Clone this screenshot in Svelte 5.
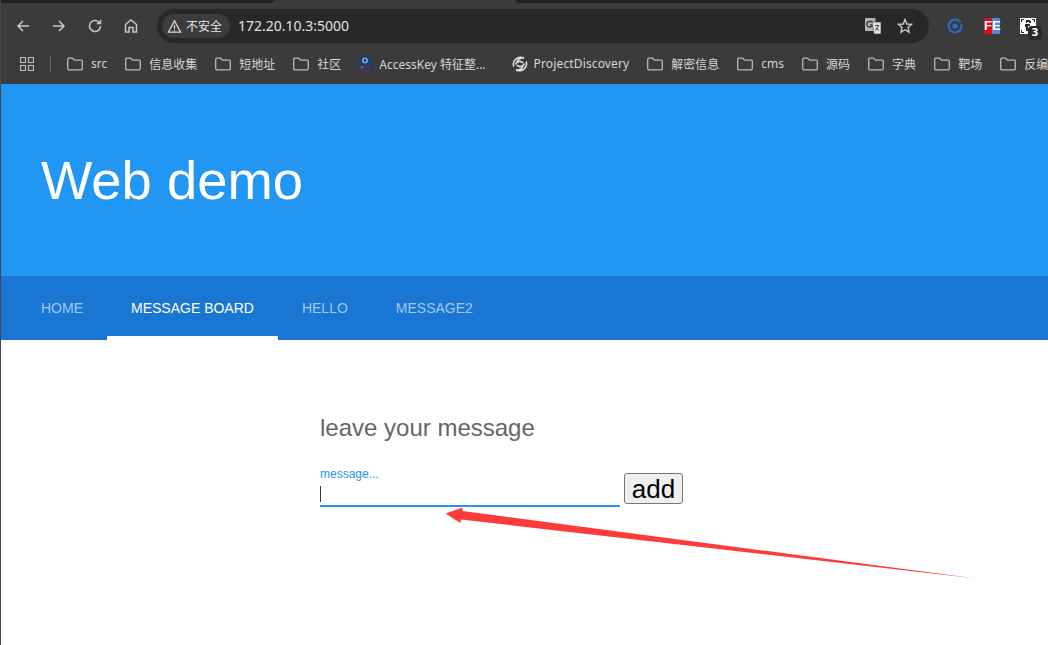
<script>
  const bookmarks = [
    { label: 'src' },
    { label: '信息收集' },
    { label: '短地址' },
    { label: '社区' },
    { label: 'AccessKey 特征整...', icon: 'avatar' },
    { label: 'ProjectDiscovery', icon: 'swirl', latin: true },
    { label: '解密信息' },
    { label: 'cms' },
    { label: '源码' },
    { label: '字典' },
    { label: '靶场' },
    { label: '反编' }
  ];

  const tabs = ['Home', 'Message board', 'Hello', 'Message2'];
  let active = 1;
  let message = '';
</script>

<div class="page">
  <div class="browser">
    <div class="tabstrip">
      <div class="strip left"></div>
      <div class="strip right"></div>
    </div>

    <div class="toolbar">
      <div class="navbtns">
        <svg viewBox="0 0 16 16"><path d="M14 8H3M8 3 3 8l5 5" /></svg>
        <svg viewBox="0 0 16 16"><path d="M2 8h11M8 3l5 5-5 5" /></svg>
        <svg viewBox="0 0 16 16"><path d="M13.500 8a5.500 5.500 0 1 1-1.700-4L13.500 5.600M13.500 1.800v3.800H9.700" /></svg>
        <svg viewBox="0 0 16 16"><path d="M2.500 14V6.500L8 2l5.500 4.500V14H10V9.500H6V14z" /></svg>
      </div>
      <div class="omnibox">
        <div class="chip">
          <svg viewBox="0 0 16 16"><path d="M8 2 1.500 14h13zM8 6.500v4M8 11.500v1.200" /></svg>
          <span>不安全</span>
        </div>
        <span class="url">172.20.10.3:5000</span>
        <div class="omni-icons">
          <svg class="translate" viewBox="0 0 16 16">
            <rect x="0" y="0" width="10.500" height="13" rx="1" fill="#b4b4b4" />
            <path d="M7.500 3.500h-3a2 2 0 0 0 0 5.500h1.300a1.500 1.500 0 0 0 1.200-2.200H5" fill="none" stroke="#3b3b3b" stroke-width="1.300" />
            <path d="M7 4h9v12H9z" fill="#e0e0e0" stroke="#3b3b3b" stroke-width=".6" />
            <path d="M10 7.500h4M12 7v1M13.200 8c-.5 2-1.500 3.500-3 4.500M11 9.500c.5 1.200 1.500 2.300 2.700 3" fill="none" stroke="#333" stroke-width=".9" />
          </svg>
          <svg class="star" viewBox="0 0 16 16"><path d="M8 1.600 9.800 6l4.800.4-3.600 3.100 1.100 4.700L8 11.700l-4.100 2.500L5 9.500 1.400 6.400 6.200 6z" /></svg>
        </div>
      </div>
      <div class="extensions">
        <svg class="ext-ring" viewBox="0 0 16 16">
          <path d="M12.400 3.200A6.400 6.400 0 1 0 14.200 6" fill="none" stroke="#2a6fd0" stroke-width="1.900" />
          <circle cx="8" cy="8" r="2.600" fill="#2a6fd0" />
          <circle cx="13" cy="3.600" r="1.200" fill="#2a6fd0" />
        </svg>
        <div class="ext-fe"><span>FE</span></div>
        <div class="ext-qr">
          <svg viewBox="0 0 16 16">
            <rect width="16" height="16" fill="#fff" />
            <path d="M1 1h3v1H2v2H1zM12 1h3v3h-1V2h-2zM1 12h1v2h2v1H1zM6 2h4v1h1v2h-2V4H7v1H6zM5 6h5v2H8v2h1v3H6V9H5z" fill="#2a2a2a" />
          </svg>
          <span class="badge">3</span>
        </div>
      </div>
    </div>

    <div class="bookmarks">
      <svg class="apps" viewBox="0 0 14 14">
        <rect x=".5" y=".5" width="5" height="5" />
        <rect x="8.500" y=".5" width="5" height="5" />
        <rect x=".5" y="8.500" width="5" height="5" />
        <rect x="8.500" y="8.500" width="5" height="5" />
      </svg>
      <div class="divider"></div>
      {#each bookmarks as b}
        <div class="bookmark" class:fav={b.icon} class:avatar={b.icon === 'avatar'} class:latin={b.latin}>
          {#if b.icon === 'avatar'}
            <svg viewBox="0 0 16 16">
              <circle cx="8" cy="8" r="8" fill="#1d3f63" />
              <circle cx="8" cy="4.500" r="3" fill="#7ea6e0" />
              <circle cx="8" cy="4.500" r="1.400" fill="#1f3d66" />
              <path d="M3 15V10h4v3h2v-3h4v5l-2 1H5z" fill="#4a3358" />
              <circle cx="5" cy="11" r="1" fill="#c75a7a" />
            </svg>
          {:else if b.icon === 'swirl'}
            <svg viewBox="0 0 16 16" fill="none" stroke="#e0e0e0" stroke-width="1.600">
              <path d="M1.800 10.500A7 7 0 0 1 12 2.300C9 1.500 5.500 3 5 6.500" />
              <path d="M14.200 5.500A7 7 0 0 1 4 13.700C7 14.500 10.500 13 11 9.500" />
              <path d="M3.500 8.500C5 4.800 9 4.500 11 7M12.500 7.500C11 11.200 7 11.500 5 9" />
            </svg>
          {:else}
            <svg viewBox="0 0 16 16" fill="none" stroke="#b9b9b9" stroke-width="1.300">
              <path d="M.7 3.200c0-.6.4-1 1-1h4l1.800 1.900h6.800c.6 0 1 .4 1 1v7.700c0 .6-.4 1-1 1H1.700c-.6 0-1-.4-1-1z" />
            </svg>
          {/if}
          <span>{b.label}</span>
        </div>
      {/each}
    </div>
  </div>

  <header class="hero">
    <h1>Web demo</h1>
  </header>

  <nav class="tabs">
    {#each tabs as tab, i}
      <a href="#top" class="tab" class:active={i === active} on:click|preventDefault={() => (active = i)}>{tab}</a>
    {/each}
  </nav>

  <main class="content">
    <h2>leave your message</h2>
    <form class="msgform" on:submit|preventDefault>
      <div class="field">
        <label for="msg">message...</label>
        <input id="msg" type="text" bind:value={message} />
        <span class="caret"></span>
      </div>
      <button type="submit">add</button>
    </form>
  </main>

  <svg class="arrow" viewBox="0 0 1048 645">
    <path d="M445.500 513.500 462.500 507.500 462.500 511 976 578.500 461 519.500 460.500 523z" />
  </svg>
  <div class="edge"></div>
</div>

<style>
  :global(body) {
    margin: 0;
    background: #fff;
    overflow: hidden;
  }

  .page {
    position: relative;
    width: 1048px;
    height: 645px;
    overflow: hidden;
    font-family: "Liberation Sans", Arial, sans-serif;
  }

  /* sliver of the window behind, along the left of the screenshot */
  .edge {
    position: absolute;
    left: 0;
    top: 0;
    bottom: 0;
    width: 1px;
    background: #474747;
  }

  /* browser chrome */
  .browser {
    height: 84px;
    background: #3b3b3b;
    color: #d6d6d6;
    font-family: "Noto Sans", "Noto Sans CJK SC", sans-serif;
  }

  .tabstrip {
    display: flex;
    justify-content: space-between;
    height: 9px;
  }

  .strip {
    height: 3px;
    background: #212121;
  }

  .strip.left {
    width: 274px;
    border-bottom-right-radius: 3px;
  }

  .strip.right {
    width: 532px;
    border-bottom-left-radius: 3px;
  }

  .toolbar {
    display: flex;
    align-items: center;
    height: 34px;
  }

  .navbtns {
    display: flex;
    flex: none;
    gap: 20px;
    padding-left: 15px;
    width: 157px;
    box-sizing: border-box;
  }

  .navbtns svg {
    width: 16px;
    height: 16px;
    fill: none;
    stroke: #c7c7c7;
    stroke-width: 1.500;
  }

  .omnibox {
    display: flex;
    flex: none;
    align-items: center;
    width: 772px;
    height: 34px;
    border-radius: 17px;
    background: #282828;
    padding-left: 5px;
    box-sizing: border-box;
  }

  .chip {
    display: flex;
    align-items: center;
    gap: 4px;
    width: 68px;
    height: 24px;
    padding-left: 5px;
    box-sizing: border-box;
    border-radius: 12px;
    background: #3c3c3c;
    font-size: 12px;
    color: #e3e3e3;
  }

  .chip svg {
    width: 15px;
    height: 15px;
    fill: none;
    stroke: #d8d8d8;
    stroke-width: 1.300;
  }

  .url {
    margin: 0 0 2px 8px;
    font-size: 14px;
    color: #e3e3e3;
  }

  .omni-icons {
    display: flex;
    align-items: center;
    gap: 16px;
    margin-left: auto;
    padding-right: 16px;
  }

  .omni-icons svg {
    width: 16px;
    height: 16px;
  }

  .star {
    fill: none;
    stroke: #c7c7c7;
    stroke-width: 1.400;
  }

  .extensions {
    display: flex;
    align-items: center;
    padding-left: 18px;
    gap: 20px;
  }

  .ext-ring {
    width: 16px;
    height: 16px;
  }

  .ext-fe {
    position: relative;
    width: 16px;
    height: 16px;
    background: linear-gradient(90deg, #e5061b 50%, #4f86e8 50%);
    border-radius: 1px;
    font: bold 13px/16px "Liberation Sans", sans-serif;
    color: #fff;
    text-align: center;
    margin-left: 1px;
  }

  .ext-qr {
    position: relative;
    width: 16px;
    height: 16px;
  }

  .ext-qr svg {
    display: block;
    width: 16px;
    height: 16px;
  }

  .badge {
    position: absolute;
    left: 8px;
    top: 8px;
    width: 14px;
    height: 14px;
    border-radius: 4px;
    background: #2a2a2a;
    color: #fff;
    font: bold 10px/14px "DejaVu Sans", sans-serif;
    text-align: center;
  }

  .bookmarks {
    display: flex;
    align-items: center;
    height: 41px;
    padding-left: 20px;
    white-space: nowrap;
    overflow: hidden;
  }

  .apps {
    flex: none;
    width: 14px;
    height: 14px;
    fill: none;
    stroke: #b9b9b9;
    stroke-width: 1.200;
  }

  .divider {
    flex: none;
    width: 1px;
    height: 16px;
    margin: 0 16px 0 16px;
    background: #6a6a6a;
  }

  .bookmark {
    flex: none;
    display: flex;
    align-items: center;
    gap: 8px;
    margin-right: 18px;
    font-size: 12px;
    color: #d6d6d6;
  }

  .bookmark.fav {
    gap: 6px;
  }

  .bookmark.avatar {
    margin-left: -2px;
    margin-right: 26px;
  }

  .bookmark.latin {
    letter-spacing: 0.14px;
  }

  .bookmark svg {
    width: 16px;
    height: 16px;
  }

  /* page */
  .hero {
    display: flex;
    align-items: center;
    height: 192px;
    padding-left: 41px;
    background: #2196f3;
    color: #fff;
  }

  h1 {
    margin: 0;
    font-size: 54.400px;
    font-weight: 400;
  }

  .tabs {
    display: flex;
    height: 64px;
    padding-left: 17px;
    background: #1976d2;
  }

  .tab {
    display: flex;
    align-items: center;
    padding: 0 24px;
    font-size: 14px;
    text-transform: uppercase;
    text-decoration: none;
    color: rgba(255, 255, 255, 0.6);
  }

  .tab.active {
    color: #fff;
    box-shadow: inset 0 -4px 0 #fff;
  }

  .content {
    padding: 74px 0 0 320px;
  }

  h2 {
    margin: 0;
    font-size: 24px;
    line-height: 28px;
    font-weight: 400;
    color: #666;
  }

  .msgform {
    display: flex;
    align-items: flex-end;
    margin-top: 25px;
  }

  .field {
    position: relative;
    width: 300px;
  }

  label {
    display: block;
    font-size: 12px;
    line-height: 14px;
    color: #2196f3;
  }

  input {
    display: block;
    width: 100%;
    height: 26px;
    padding: 0;
    box-sizing: border-box;
    border: none;
    border-bottom: 2px solid #2196f3;
    outline: none;
    background: transparent;
    font-size: 16px;
  }

  .caret {
    position: absolute;
    left: 0;
    top: 19px;
    width: 1px;
    height: 16px;
    background: #333;
  }

  button {
    width: 59px;
    height: 31px;
    margin: 0 0 3px 4px;
    padding: 0;
    box-sizing: border-box;
    border: 1px solid #767676;
    border-radius: 3px;
    background: #efefef;
    font-family: "Liberation Sans", Arial, sans-serif;
    font-size: 26px;
    line-height: 28px;
    color: #000;
  }

  .arrow {
    position: absolute;
    inset: 0;
    width: 1048px;
    height: 645px;
    pointer-events: none;
  }

  .arrow path {
    fill: #fe3b3b;
  }
</style>
